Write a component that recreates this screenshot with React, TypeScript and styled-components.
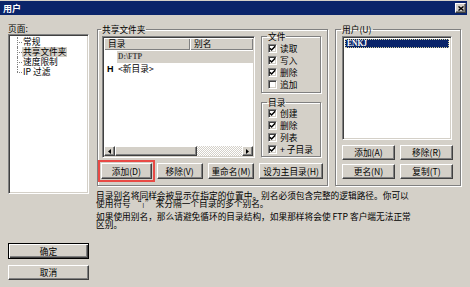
import styled, { createGlobalStyle, css } from 'styled-components';

const GlobalStyle = createGlobalStyle`
  html, body {
    margin: 0;
    padding: 0;
    background: #d4d0c8;
  }
  body {
    font-family: 'Noto Sans CJK SC', 'Liberation Sans', sans-serif;
  }
`;

const raised = css`
  background: #d4d0c8;
  border: 1px solid;
  border-color: #fff #404040 #404040 #fff;
  box-shadow: inset -1px -1px 0 #808080;
`;

const sunken = css`
  background: #fff;
  border: 1px solid;
  border-color: #808080 #fff #fff #808080;
  box-shadow: inset 1px 1px 0 #404040, inset -1px -1px 0 #d4d0c8;
`;

const Window = styled.div`
  width: 470px;
  height: 287px;
  box-sizing: border-box;
  padding: 1px 3px 0 0;
  background: #d4d0c8;
  color: #000;
  font-size: 8.7px;
  line-height: 9px;
  display: flex;
  flex-direction: column;
  overflow: hidden;
`;

const TitleBar = styled.div`
  height: 14px;
  background: #0a246a;
  display: flex;
  align-items: center;
  justify-content: space-between;
  padding: 0 1px 0 3px;
`;

const Title = styled.span`
  color: #fff;
  font-weight: bold;
  font-size: 9px;
`;

const CloseButton = styled.span`
  ${raised};
  width: 11px;
  height: 10px;
  box-sizing: border-box;
  display: flex;
  align-items: center;
  justify-content: center;
`;

const Body = styled.div`
  display: flex;
  gap: 8px;
  padding: 9px 0 0 8px;
`;

const LeftCol = styled.div`
  width: 81px;
  display: flex;
  flex-direction: column;
`;

const PageLabel = styled.div`
  height: 9px;
  margin-bottom: 1px;
`;

const Tree = styled.div`
  ${sunken};
  height: 160px;
  box-sizing: border-box;
  padding: 2px 0 0 8px;
`;

const TreeList = styled.div`
  display: flex;
  flex-direction: column;
`;

const TreeItem = styled.div<{ $last?: boolean }>`
  position: relative;
  height: 10px;
  display: flex;
  align-items: center;
  padding-left: 5px;

  &::before {
    content: '';
    position: absolute;
    left: 0;
    top: 50%;
    width: 5px;
    border-top: 1px dotted #808080;
  }
  &::after {
    content: '';
    position: absolute;
    left: 0;
    top: 0;
    height: ${(p) => (p.$last ? '50%' : '100%')};
    border-left: 1px dotted #808080;
  }
`;

const TreeLabel = styled.span<{ $selected?: boolean }>`
  padding: 0 1px;
  line-height: 10px;
  background: ${(p) => (p.$selected ? '#d4d0c8' : 'transparent')};
`;

const DialogButtons = styled.div`
  margin-top: 49px;
  display: flex;
  flex-direction: column;
  gap: 6px;
`;

const PushButton = styled.button<{ $w?: number; $h?: number; $default?: boolean; $marked?: boolean }>`
  ${raised};
  font: inherit;
  color: #000;
  padding: 0;
  margin: 0;
  width: ${(p) => (p.$w ? `${p.$w}px` : '100%')};
  height: ${(p) => p.$h ?? 16}px;
  box-sizing: border-box;
  display: flex;
  align-items: center;
  justify-content: center;
  white-space: nowrap;
  ${(p) =>
    p.$default &&
    css`
      border: 1px solid #000;
      box-shadow: inset 1px 1px 0 #fff, inset -1px -1px 0 #404040, inset -2px -2px 0 #808080;
    `}
  ${(p) =>
    p.$marked &&
    css`
      outline: 2px solid #e84a45;
      outline-offset: 1px;
    `}
`;

const MainCol = styled.div`
  width: 364px;
  display: flex;
  flex-direction: column;
`;

const TopRow = styled.div`
  display: flex;
  gap: 7px;
  margin-top: 1px;
`;

const Group = styled.fieldset<{ $w: number; $h: number; $pad?: string }>`
  margin: 0;
  min-width: 0;
  width: ${(p) => p.$w}px;
  height: ${(p) => p.$h}px;
  box-sizing: border-box;
  padding: ${(p) => p.$pad ?? '2px 4px 6px 4px'};
  border: 1px solid #808080;
  box-shadow: inset 1px 1px 0 #fff, 1px 1px 0 #fff;
`;

const Legend = styled.legend<{ $offset?: number }>`
  padding: 0 1px;
  margin-left: ${(p) => p.$offset ?? -1}px;
  height: 9px;
  line-height: 9px;
  font-size: 8.7px;
`;

const SharedTop = styled.div`
  display: flex;
  gap: 6px;
  align-items: flex-start;
`;

const ListView = styled.div`
  ${sunken};
  width: 153px;
  height: 122px;
  box-sizing: border-box;
  padding: 1px;
  display: flex;
  flex-direction: column;
`;

const HeaderRow = styled.div`
  display: flex;
  height: 12px;
  flex-shrink: 0;
`;

const HeaderCell = styled.div<{ $w?: number }>`
  background: #d4d0c8;
  box-shadow: inset 1px 1px 0 #fff, inset -1px -1px 0 #808080;
  ${(p) => (p.$w ? `width: ${p.$w}px;` : 'flex: 1;')}
  padding-left: 4px;
  box-sizing: border-box;
  display: flex;
  align-items: center;
  line-height: 12px;
`;

const Rows = styled.div`
  flex: 1;
  padding-top: 1px;
`;

const Row = styled.div`
  display: flex;
  height: 12px;
  align-items: center;
`;

const StateSlot = styled.span`
  width: 13px;
  padding-left: 3px;
  box-sizing: border-box;
  font-family: 'Liberation Sans', sans-serif;
  font-weight: bold;
  font-size: 9px;
`;

const RowLabel = styled.span<{ $selected?: boolean; $latin?: boolean }>`
  flex: 1;
  height: 12px;
  line-height: 12px;
  padding-left: 1px;
  background: ${(p) => (p.$selected ? '#d4d0c8' : 'transparent')};
  ${(p) =>
    p.$latin &&
    css`
      font-family: 'Liberation Serif', serif;
      font-size: 7.5px;
      font-weight: bold;
      color: #444;
    `}
`;

const HScroll = styled.div`
  display: flex;
  height: 10px;
  flex-shrink: 0;
`;

const ScrollArrow = styled.div`
  ${raised};
  width: 11px;
  box-sizing: border-box;
  display: flex;
  align-items: center;
  justify-content: center;
`;

const ScrollThumb = styled.div`
  ${raised};
  width: 82px;
  box-sizing: border-box;
`;

const ScrollTrack = styled.div`
  flex: 1;
  background: repeating-conic-gradient(#fff 0 25%, #d4d0c8 0 50%) 0 0 / 2px 2px;
`;

const OptionsCol = styled.div`
  width: 60px;
  margin-top: -4px;
  display: flex;
  flex-direction: column;
  gap: 5px;
`;

const CheckRow = styled.div`
  height: 12px;
  display: flex;
  align-items: center;
  gap: 3px;
`;

const CheckBox = styled.span`
  ${sunken};
  width: 9px;
  height: 9px;
  box-sizing: border-box;
  display: flex;
  align-items: center;
  justify-content: center;
`;

const ButtonRow = styled.div`
  display: flex;
  gap: 5px;
  margin-top: 5px;
  margin-left: -1px;
`;

const ListBox = styled.div`
  ${sunken};
  width: 110px;
  height: 104px;
  box-sizing: border-box;
  padding: 2px;
`;

const ListItem = styled.div`
  height: 9px;
  background: #0a246a;
  color: #fff;
  font-family: 'Liberation Serif', serif;
  font-weight: bold;
  font-size: 7.5px;
  line-height: 9px;
  padding-left: 2px;
  outline: 1px dotted #d8d29a;
  outline-offset: -1px;
`;

const UserButtons = styled.div`
  display: grid;
  grid-template-columns: 53px 53px;
  column-gap: 5px;
  row-gap: 4px;
  margin-top: 5px;
`;

const Notes = styled.div`
  margin: 6px 0 0 -1px;
  white-space: nowrap;
  line-height: 8.3px;
`;

const Para = styled.p`
  margin: 0 0 3.7px 0;
`;

const Pipe = styled.span`
  font-family: 'Liberation Sans', sans-serif;
  font-size: 6px;
  line-height: 8px;
  padding: 0 1px;
`;

const Check = ({ on }: { on: boolean }) => (
  <CheckBox>
    {on && (
      <svg width="7" height="7" viewBox="0 0 7 7">
        <path d="M0.8 3.2 L2.6 5 L6.2 1.3" stroke="#000" strokeWidth="1.5" fill="none" />
      </svg>
    )}
  </CheckBox>
);

const Arrow = ({ dir }: { dir: 'left' | 'right' }) => (
  <svg width="3" height="5" viewBox="0 0 3 5">
    <polygon points={dir === 'left' ? '3,0 3,5 0,2.5' : '0,0 0,5 3,2.5'} fill="#000" />
  </svg>
);

const fileOpts: [string, boolean][] = [
  ['读取', true],
  ['写入', true],
  ['删除', true],
  ['追加', false],
];

const dirOpts: [string, boolean][] = [
  ['创建', true],
  ['删除', true],
  ['列表', true],
  ['+ 子目录', true],
];

const treeItems = ['常规', '共享文件夹', '速度限制', 'IP 过滤'];

export default function App() {
  return (
    <>
      <GlobalStyle />
      <Window>
        <TitleBar>
          <Title>用户</Title>
          <CloseButton>
            <svg width="6" height="5" viewBox="0 0 6 5">
              <path d="M0.5 0.5 L5.5 4.5 M5.5 0.5 L0.5 4.5" stroke="#000" strokeWidth="1.4" />
            </svg>
          </CloseButton>
        </TitleBar>
        <Body>
          <LeftCol>
            <PageLabel>页面:</PageLabel>
            <Tree>
              <TreeList>
                {treeItems.map((t, i) => (
                  <TreeItem key={t} $last={i === treeItems.length - 1}>
                    <TreeLabel $selected={i === 1}>{t}</TreeLabel>
                  </TreeItem>
                ))}
              </TreeList>
            </Tree>
            <DialogButtons>
              <PushButton $default>确定</PushButton>
              <PushButton $h={15}>取消</PushButton>
            </DialogButtons>
          </LeftCol>
          <MainCol>
            <TopRow>
              <Group $w={231} $h={161}>
                <Legend>共享文件夹</Legend>
                <SharedTop>
                  <ListView>
                    <HeaderRow>
                      <HeaderCell $w={86}>目录</HeaderCell>
                      <HeaderCell>别名</HeaderCell>
                    </HeaderRow>
                    <Rows>
                      <Row>
                        <StateSlot />
                        <RowLabel $selected $latin>
                          D:\FTP
                        </RowLabel>
                      </Row>
                      <Row>
                        <StateSlot>H</StateSlot>
                        <RowLabel>&lt;新目录&gt;</RowLabel>
                      </Row>
                    </Rows>
                    <HScroll>
                      <ScrollArrow>
                        <Arrow dir="left" />
                      </ScrollArrow>
                      <ScrollThumb />
                      <ScrollTrack />
                      <ScrollArrow>
                        <Arrow dir="right" />
                      </ScrollArrow>
                    </HScroll>
                  </ListView>
                  <OptionsCol>
                    <Group $w={60} $h={61} $pad="1px 0 2px 6px">
                      <Legend>文件</Legend>
                      {fileOpts.map(([label, on]) => (
                        <CheckRow key={label}>
                          <Check on={on} />
                          {label}
                        </CheckRow>
                      ))}
                    </Group>
                    <Group $w={60} $h={59} $pad="0 0 2px 6px">
                      <Legend>目录</Legend>
                      {dirOpts.map(([label, on]) => (
                        <CheckRow key={label}>
                          <Check on={on} />
                          {label}
                        </CheckRow>
                      ))}
                    </Group>
                  </OptionsCol>
                </SharedTop>
                <ButtonRow>
                  <PushButton $w={51} $marked>
                    添加(D)
                  </PushButton>
                  <PushButton $w={46}>移除(V)</PushButton>
                  <PushButton $w={47}>重命名(M)</PushButton>
                  <PushButton $w={64}>设为主目录(H)</PushButton>
                </ButtonRow>
              </Group>
              <Group $w={126} $h={161} $pad="2px 0 6px 6px">
                <Legend>用户(U)</Legend>
                <ListBox>
                  <ListItem>ENKJ</ListItem>
                </ListBox>
                <UserButtons>
                  <PushButton $h={15}>添加(A)</PushButton>
                  <PushButton $h={15}>移除(R)</PushButton>
                  <PushButton $h={15}>更名(N)</PushButton>
                  <PushButton $h={15}>复制(T)</PushButton>
                </UserButtons>
              </Group>
            </TopRow>
            <Notes>
              <Para>
                目录别名将同样会被显示在指定的位置中。别名必须包含完整的逻辑路径。你可以
                <br />
                使用符号 “<Pipe>|</Pipe>” 来分隔一个目录的多个别名。
              </Para>
              <Para>
                如果使用别名，那么请避免循环的目录结构，如果那样将会使 FTP 客户端无法正常
                <br />
                区别。
              </Para>
            </Notes>
          </MainCol>
        </Body>
      </Window>
    </>
  );
}
